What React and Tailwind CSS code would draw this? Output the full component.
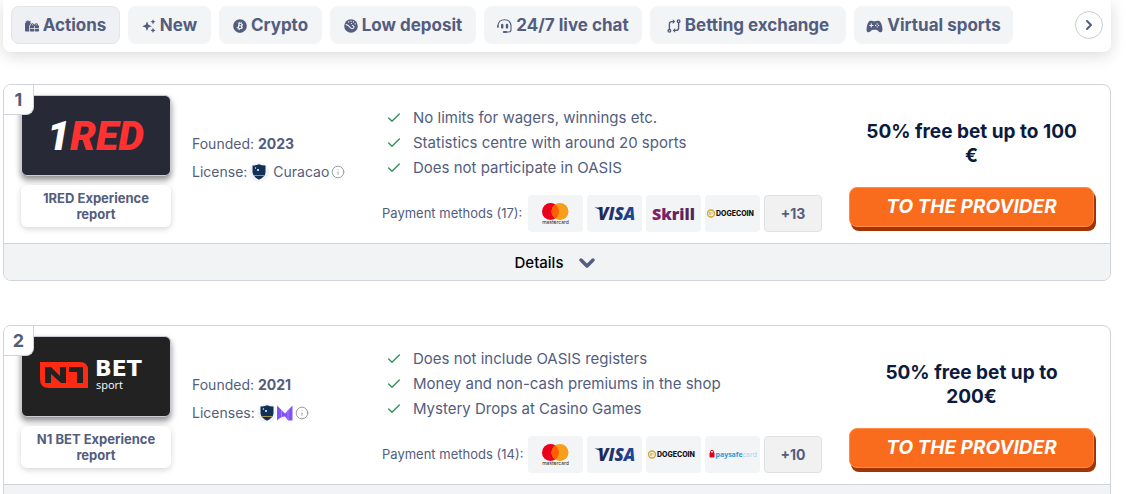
import React from "react";
import { FaBitcoin, FaGifts } from "react-icons/fa6";
import { IoGameController } from "react-icons/io5";
import { Check, ChevronDown, ChevronRight, Info } from "lucide-react";

const SparkleIcon = () => (
  <svg width="14" height="14" viewBox="0 0 14 14" fill="currentColor" aria-hidden="true">
    <path d="M5 2.5 6.4 5.8 9.8 7.2 6.4 8.6 5 12 3.6 8.6.2 7.2 3.6 5.8Z" />
    <path d="m11 .2.8 1.8 1.8.8-1.8.8-.8 1.8-.8-1.8-1.8-.8 1.8-.8ZM11 8.8l.8 1.8 1.8.8-1.8.8-.8 1.8-.8-1.8-1.8-.8 1.8-.8Z" />
  </svg>
);

const DepositIcon = () => (
  <svg width="14" height="14" viewBox="0 0 14 14" aria-hidden="true">
    <circle cx="7" cy="7" r="6.8" fill="currentColor" />
    <g fill="none" stroke="#f2f4f6" strokeLinecap="round">
      <path d="M2.2 5.4 4.6 6.8M4.8 7.2l2.4 2.2c1.2.8 3-.2 2.8-1.8L8.6 6.4" strokeWidth="1.1" />
      <path d="M4.6 2.9h.1M7 2.2h.1M9.4 2.9h.1M11.2 4.8h.1M7.4 4.6h.1" strokeWidth="1.3" />
    </g>
  </svg>
);

const SupportIcon = () => (
  <svg width="15" height="14" viewBox="0 0 15 14" fill="none" stroke="currentColor" aria-hidden="true">
    <path d="M1 7.5V6.4C1.4 2.8 4.2.8 7.5.8s6.1 2 6.5 5.6v4.4c0 1.3-.9 2.2-2.2 2.2H9.5" strokeWidth="1.1" />
    <path d="M5.2 6v2.4M10 6v2.4" strokeWidth="2.4" strokeLinecap="round" />
    <path d="M6.8 13h2.4" strokeWidth="1.8" strokeLinecap="round" />
    <path d="M.9 6.3v2.4" strokeWidth="1.5" />
  </svg>
);

const ExchangeIcon = () => (
  <svg width="14" height="14" viewBox="0 0 14 14" fill="none" stroke="currentColor" strokeWidth="1.4" aria-hidden="true">
    <circle cx="2.4" cy="11.8" r="1.3" />
    <circle cx="11.6" cy="2.2" r="1.3" />
    <path d="M2.400 10.500V5Q2.400 2.600 4.800 2.600H6.500M11.600 3.500V9Q11.600 11.400 9.200 11.400H7.500" />
    <path d="M5.800.3 8.300 2.600 5.800 4.900ZM8.200 9.100 5.700 11.400 8.200 13.700Z" fill="currentColor" stroke="none" />
  </svg>
);

const filters = [
  { label: "Actions", icon: <FaGifts size={14} />, width: "w-[109px]", active: true },
  { label: "New", icon: <SparkleIcon />, width: "w-[83px]" },
  { label: "Crypto", icon: <FaBitcoin size={14} />, width: "w-[103px]" },
  { label: "Low deposit", icon: <DepositIcon />, width: "w-[146px]" },
  { label: "24/7 live chat", icon: <SupportIcon />, width: "w-[158px]" },
  { label: "Betting exchange", icon: <ExchangeIcon />, width: "w-[196px]" },
  { label: "Virtual sports", icon: <IoGameController size={17} />, width: "w-[159px]" },
];

const RedLogo = () => (
  <svg viewBox="0 0 148 79" className="w-full h-full" role="img" aria-label="1RED">
    <text x="25" y="54" fontFamily="Roboto, sans-serif" fontWeight="900" fontStyle="italic" fontSize="41" fill="#ff3131">
      <tspan fill="#ffffff">1</tspan>RED
    </text>
  </svg>
);

const N1Logo = () => (
  <svg viewBox="0 0 148 79" className="w-full h-full" role="img" aria-label="N1 BET sport">
    <path d="M18 25h40q8 0 8 8v18H27q-9 0-9-9Z" fill="#ff2a12" />
    <path d="M23 46V30h6l9 9v-9h6v16h-5l-10-9v9ZM47 30h14v16h-6V35h-8Z" fill="#222222" />
    <text x="73" y="39" fill="#ffffff" fontFamily="DejaVu Sans, sans-serif" fontWeight="700" fontSize="22">BET</text>
    <text x="74" y="52" fill="#ffffff" fontFamily="Open Sans, sans-serif" fontSize="11">sport</text>
  </svg>
);

const CuracaoIcon = () => (
  <span className="flex size-5 items-center justify-center rounded-full bg-[#f2f4f6]">
    <svg width="14" height="16" viewBox="0 0 14 16" role="img" aria-label="Curacao">
      <path d="M.5 1.5Q4 1.5 7 .2q3 1.3 6.5 1.3v7Q13 13 7 15.8 1 13 .5 8.500Z" fill="#123057" />
      <path d="M2 11.500h10" stroke="#a39350" strokeWidth="1" />
      <circle cx="3.500" cy="4" r=".7" fill="#fff" />
      <circle cx="6" cy="6" r="1" fill="#fff" />
    </svg>
  </span>
);

const MaltaIcon = () => (
  <svg width="16" height="16" viewBox="0 0 16 16" role="img" aria-label="Second licence">
    <path d="M0 .5 8 8.500 15.500.5V15.500H11L8 11.500Q4 11.500 0 15.500Z" fill="#8152f5" />
    <path d="M4.500 5v7M11 5v10" stroke="#b39bfa" strokeWidth=".7" />
  </svg>
);

const Mastercard = () => (
  <svg width="55" height="37" viewBox="0 0 55 37" role="img" aria-label="mastercard">
    <circle cx="22.500" cy="16.500" r="8.500" fill="#eb001b" />
    <circle cx="32" cy="16.500" r="8.500" fill="#f79e1b" />
    <path d="M27.250 9.500a8.500 8.500 0 0 1 0 14 8.500 8.500 0 0 1 0-14Z" fill="#ff5f00" />
    <text x="27.500" y="29" textAnchor="middle" fontFamily="Inter, sans-serif" fontSize="5" fill="#231f20">mastercard</text>
  </svg>
);

const Visa = () => (
  <svg width="55" height="37" viewBox="0 0 55 37" role="img" aria-label="VISA">
    <defs>
      <linearGradient id="visa">
        <stop offset="0" stopColor="#202454" />
        <stop offset="1" stopColor="#1d4899" />
      </linearGradient>
    </defs>
    <path d="M7.500 12.500h6l1 3.500q-3-2.500-7-3.500" fill="#202454" />
    <text x="11" y="25" fontFamily="Open Sans, sans-serif" fontWeight="800" fontStyle="italic" fontSize="17" fill="url(#visa)">VISA</text>
  </svg>
);

const Skrill = () => (
  <svg width="55" height="37" viewBox="0 0 55 37" role="img" aria-label="Skrill">
    <defs>
      <linearGradient id="skrill">
        <stop offset="0" stopColor="#8a1f6b" />
        <stop offset="1" stopColor="#4d2358" />
      </linearGradient>
    </defs>
    <text x="27.500" y="25" textAnchor="middle" fontFamily="Open Sans, sans-serif" fontWeight="800" fontSize="16" fill="url(#skrill)">Skrill</text>
  </svg>
);

const Dogecoin = () => (
  <svg width="55" height="37" viewBox="0 0 55 37" role="img" aria-label="DOGECOIN">
    <circle cx="6" cy="18.500" r="3.500" fill="#f5ecd0" stroke="#c9a73a" strokeWidth="1.300" />
    <path d="M5 17v3M7 17.500v1" stroke="#a98c3c" strokeWidth=".8" />
    <text x="11" y="21" fontFamily="Inter, sans-serif" fontWeight="800" fontSize="7" fill="#111111">DOGECOIN</text>
  </svg>
);

const Paysafe = () => (
  <svg width="55" height="37" viewBox="0 0 55 37" role="img" aria-label="paysafecard">
    <path d="M5.500 17v-1.200a1.500 1.500 0 0 1 3 0V17" fill="none" stroke="#e2001a" />
    <rect x="4.500" y="16.500" width="5" height="5" rx="1" fill="#e2001a" />
    <text x="10.500" y="21" fontFamily="Open Sans, sans-serif" fontSize="7" fill="#2a9bd4">
      <tspan fontWeight="700">paysafe</tspan>
      <tspan fill="#a9d3e8">card</tspan>
    </text>
  </svg>
);

const providers = [
  {
    rank: 1,
    name: "1RED",
    logo: <RedLogo />,
    logoBg: "bg-[#282936]",
    founded: 2023,
    licenseLabel: "License:",
    licenses: (
      <>
        <CuracaoIcon />
        <span className="ml-1">Curacao</span>
      </>
    ),
    perks: [
      "No limits for wagers, winnings etc.",
      "Statistics centre with around 20 sports",
      "Does not participate in OASIS",
    ],
    paymentCount: 17,
    payments: [Mastercard, Visa, Skrill, Dogecoin],
    more: 13,
    bonus: ["50% free bet up to 100", "€"],
  },
  {
    rank: 2,
    name: "N1 BET",
    logo: <N1Logo />,
    logoBg: "bg-[#222222]",
    founded: 2021,
    licenseLabel: "Licenses:",
    licenses: (
      <>
        <CuracaoIcon />
        <MaltaIcon />
      </>
    ),
    perks: [
      "Does not include OASIS registers",
      "Money and non-cash premiums in the shop",
      "Mystery Drops at Casino Games",
    ],
    paymentCount: 14,
    payments: [Mastercard, Visa, Dogecoin, Paysafe],
    more: 10,
    bonus: ["50% free bet up to", "200€"],
  },
];

const ProviderCard = ({ provider }) => (
  <article className="relative overflow-hidden rounded-lg border border-[#d0d3da] bg-white">
    <span className="absolute left-0 top-0 z-10 flex size-[30px] items-center justify-center rounded-br-lg border-b border-r border-[#d0d3da] bg-white text-lg font-bold">
      {provider.rank}
    </span>

    <div className="flex items-start pb-[11px] pl-[17px] pr-4">
      <div className="w-[150px] shrink-0 pt-2.5">
        <div className={`h-[81px] overflow-hidden rounded-md border border-[#c9ccd4] shadow-[0_4px_6px_rgba(0,0,0,0.45)] ${provider.logoBg}`}>
          {provider.logo}
        </div>
        <a
          href="#report"
          className="mt-[9px] flex h-[42px] items-center justify-center rounded-md bg-white px-3 text-center text-[13px] leading-4 font-bold shadow-[0_2px_6px_rgba(0,0,0,0.16)]"
        >
          {provider.name} Experience report
        </a>
      </div>

      <div className="ml-[21px] w-[190px] shrink-0 pt-[45px] text-sm leading-7">
        <p>
          Founded: <strong>{provider.founded}</strong>
        </p>
        <p className="flex items-center">
          <span className="mr-0.5">{provider.licenseLabel}</span>
          {provider.licenses}
          <Info size={14} strokeWidth={1.5} className="ml-0.5 text-[#8e9097]" />
        </p>
      </div>

      <div className="min-w-0 flex-1 pt-5">
        <ul className="pl-1 text-[15px] leading-[25px]">
          {provider.perks.map((perk) => (
            <li key={perk} className="flex items-center gap-[11px] whitespace-nowrap">
              <Check size={16} strokeWidth={2} className="shrink-0 text-[#2e9158]" />
              {perk}
            </li>
          ))}
        </ul>
        <div className="mt-[15px] flex items-center justify-between">
          <span className="whitespace-nowrap text-[13px]">Payment methods ({provider.paymentCount}):</span>
          <div className="flex gap-1">
            {provider.payments.map((Logo, i) => (
              <span key={i} className="h-[37px] w-[55px] overflow-hidden rounded bg-[#f2f4f6]">
                <Logo />
              </span>
            ))}
            <button className="h-[37px] w-[58px] rounded border border-[#dfe0e2] bg-[#f1f1f2] text-sm font-bold">
              +{provider.more}
            </button>
          </div>
        </div>
      </div>

      <div className="ml-[27px] w-[245px] shrink-0 pt-[35px] text-center">
        <p className="text-[19px] leading-6 font-bold text-[#0c1a3e]">
          {provider.bonus[0]}
          <br />
          {provider.bonus[1]}
        </p>
        <button className="mt-[19px] h-10 w-full rounded-lg border border-[#ff8a4a] bg-[#f96b1d] text-[19px] font-bold italic text-white shadow-[2px_4px_0_#a03503]">
          TO THE PROVIDER
        </button>
      </div>
    </div>

    <button className="flex h-[37px] w-full items-center justify-center gap-3 border-t border-[#d0d3da] bg-[#f2f3f5] pt-0.5 text-[15px] font-medium text-black">
      Details
      <ChevronDown size={24} strokeWidth={3.5} className="text-[#535d7e]" />
    </button>
  </article>
);

const App = () => {
  return (
    <div className="min-h-screen bg-white pl-[3px] pr-6 font-['Inter',sans-serif] text-[#535d7e]">
      <nav className="flex items-center justify-between rounded-b-lg bg-white px-2 pb-2 pt-1.5 shadow-[0_4px_16px_rgba(0,0,0,0.14)]">
        <div className="flex gap-2">
          {filters.map((filter) => (
            <button
              key={filter.label}
              className={`flex h-[38px] shrink-0 items-center justify-center gap-1 whitespace-nowrap rounded-lg pt-0.5 text-[17px] font-bold ${filter.width} ${
                filter.active ? "border border-[#e2e5e9] bg-[#eef0f3]" : "bg-[#f2f4f6]"
              }`}
            >
              {filter.icon}
              {filter.label}
            </button>
          ))}
        </div>
        <button
          aria-label="Next"
          className="flex size-7 items-center justify-center rounded-full border border-[#c9ccd6] bg-white"
        >
          <ChevronRight size={16} strokeWidth={3} />
        </button>
      </nav>

      <main className="mt-8 flex flex-col gap-11">
        {providers.map((provider) => (
          <ProviderCard key={provider.rank} provider={provider} />
        ))}
      </main>
    </div>
  );
};

export default App;
